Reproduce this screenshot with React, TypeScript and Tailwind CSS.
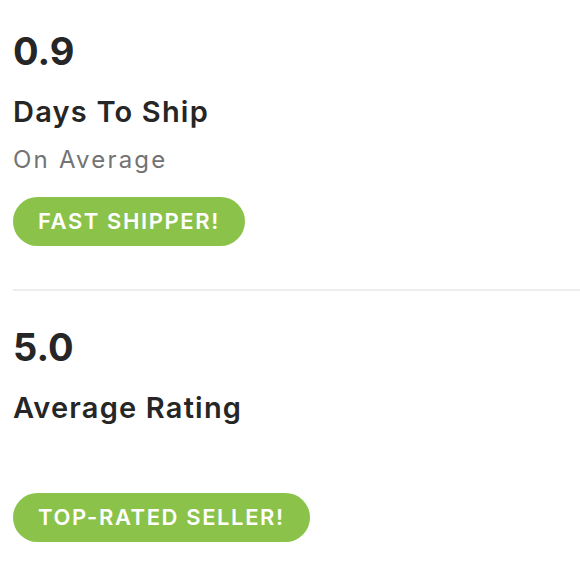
export default function App() {
  const Section = ({ num, title, sub, badge }: { num: string; title: string; sub: string; badge: string }) => (
    <div className="flex flex-col items-start">
      <div className="text-[38px] font-bold leading-[46px] text-[#262626]">{num}</div>
      <div className="mt-[20px] text-[29px] font-semibold leading-[36px] tracking-[1.2px] text-[#262626]">{title}</div>
      <div className="mt-[15px] h-[30px] text-[24px] leading-[30px] tracking-[2.2px] text-[#737373]">{sub}</div>
      <div className="mt-[22px] flex h-[49px] items-center rounded-full bg-[#8bc34a] px-[25px] text-[22px] font-semibold tracking-[1.6px] text-white">
        {badge}
      </div>
    </div>
  );
  return (
    <div className="min-h-[580px] bg-white pl-[13px] pt-[28px]" style={{ fontFamily: 'Inter, "Open Sans", sans-serif' }}>
      <Section num="0.9" title="Days To Ship" sub="On Average" badge="FAST SHIPPER!" />
      <div className="mt-[43px] h-[2px] bg-[#eeeeee]" />
      <div className="mt-[33px]">
        <Section num="5.0" title="Average Rating" sub="" badge="TOP-RATED SELLER!" />
      </div>
    </div>
  );
}
